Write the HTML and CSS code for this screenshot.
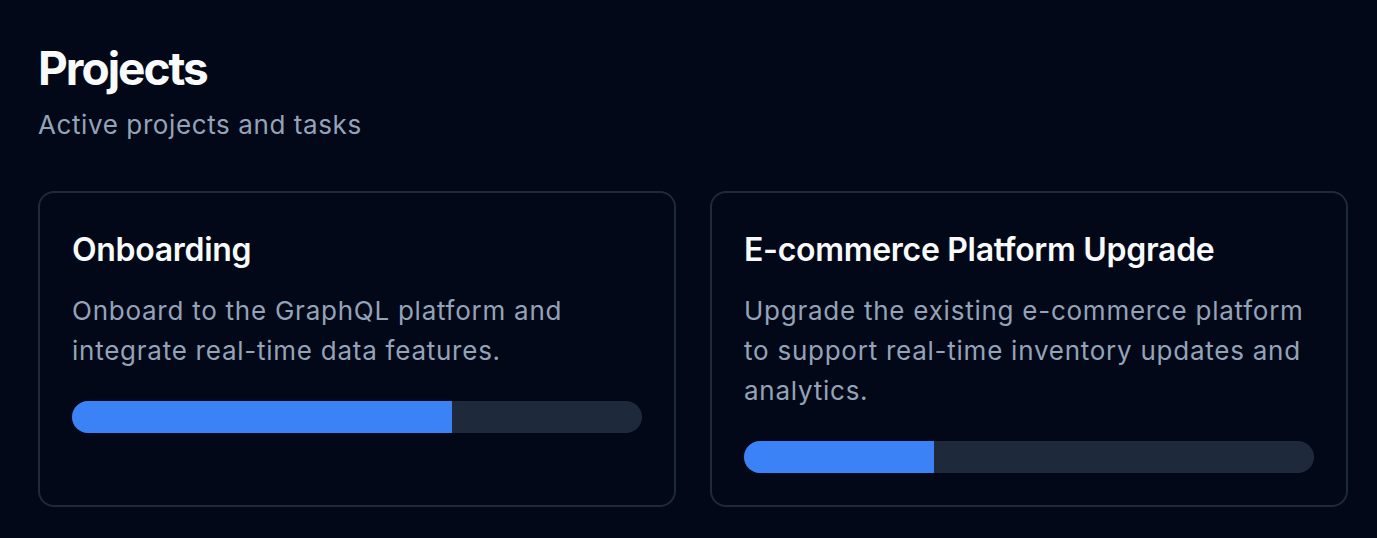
FILE: index.html
```html
<!DOCTYPE html>
<html lang="en">
  <head>
    <meta charset="utf-8">
    <title>Projects</title>
    <link rel="stylesheet" href="styles.css">
  </head>
  <body>
    <header class="page-head">
      <h1>Projects</h1>
      <p class="subtitle">Active projects and tasks</p>
    </header>
    <section class="projects">
      <div class="card">
        <h2>Onboarding</h2>
        <p class="desc">Onboard to the GraphQL platform and integrate real-time data features.</p>
        <div class="progress">
          <div class="bar" style="width: 66.7%"></div>
        </div>
      </div>
      <div class="card">
        <h2>E-commerce Platform Upgrade</h2>
        <p class="desc">Upgrade the existing e-commerce platform to support real-time inventory updates and analytics.</p>
        <div class="progress">
          <div class="bar" style="width: 33.3%"></div>
        </div>
      </div>
    </section>
  </body>
</html>
```

FILE: styles.css
```css
body {
  margin: 0;
  padding: 41px 29px 32px 38px;
  background: #020817;
  color: #f8fafc;
  font-family: Inter, "Noto Sans", sans-serif;
}

h1 {
  margin: 0;
  font-size: 46px;
  line-height: 55px;
  font-weight: 700;
  letter-spacing: -2px;
}

.subtitle {
  margin: 9px 0 0;
  font-size: 26px;
  line-height: 40px;
  letter-spacing: 0.6px;
  color: #94a3b8;
}

.projects {
  display: grid;
  grid-template-columns: 1fr 1fr;
  gap: 34px;
  margin-top: 46px;
}

.card {
  border: 2px solid #1e293b;
  border-radius: 16px;
  padding: 35px 32px 32px;
}

.card h2 {
  margin: 0;
  font-size: 32px;
  line-height: 44px;
  font-weight: 600;
  letter-spacing: -0.3px;
}

.desc {
  margin: 19px 0 0;
  font-size: 26px;
  line-height: 40px;
  letter-spacing: 0.75px;
  color: #94a3b8;
}

.progress {
  margin-top: 30px;
  height: 32px;
  border-radius: 16px;
  background: #1e293b;
  overflow: hidden;
}

.bar {
  height: 100%;
  background: #3b82f6;
}
```
